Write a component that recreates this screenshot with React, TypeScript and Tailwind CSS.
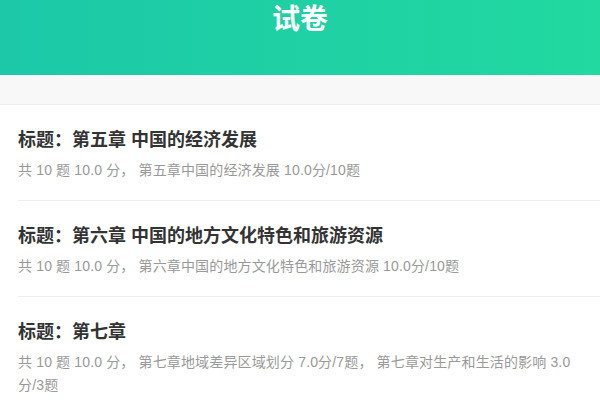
import React from "react";

const items = [
  {
    title: "标题：第五章 中国的经济发展",
    desc: "共 10 题 10.0 分， 第五章中国的经济发展 10.0分/10题",
  },
  {
    title: "标题：第六章 中国的地方文化特色和旅游资源",
    desc: "共 10 题 10.0 分， 第六章中国的地方文化特色和旅游资源 10.0分/10题",
  },
  {
    title: "标题：第七章",
    desc: "共 10 题 10.0 分， 第七章地域差异区域划分 7.0分/7题， 第七章对生产和生活的影响 3.0分/3题",
  },
];

export default function App() {
  return (
    <div
      className="w-[600px] h-[400px] overflow-hidden bg-white"
      style={{ fontFamily: '"Liberation Sans", "Noto Sans CJK SC", sans-serif' }}
    >
      <div className="h-[75px] bg-gradient-to-r from-[#1cc8a8] to-[#22d9a0] flex justify-center">
        <div className="text-white font-bold text-[28px] leading-[40px]">试卷</div>
      </div>
      <div className="h-[30px] bg-[#f8f8f8] border-b border-[#eeeeee]" />
      <div>
        {items.map((it, i) => (
          <div key={i} className="pl-[18px]">
            <div className="pt-[22px] pb-[18px] pr-[24px] border-b border-[#eeeeee]">
              <div className="text-[18px] leading-[26px] font-bold text-[#333333]">{it.title}</div>
              <div className="mt-[6px] text-[14px] leading-[23px] tracking-[0.15px] text-[#999999]">{it.desc}</div>
            </div>
          </div>
        ))}
      </div>
    </div>
  );
}
